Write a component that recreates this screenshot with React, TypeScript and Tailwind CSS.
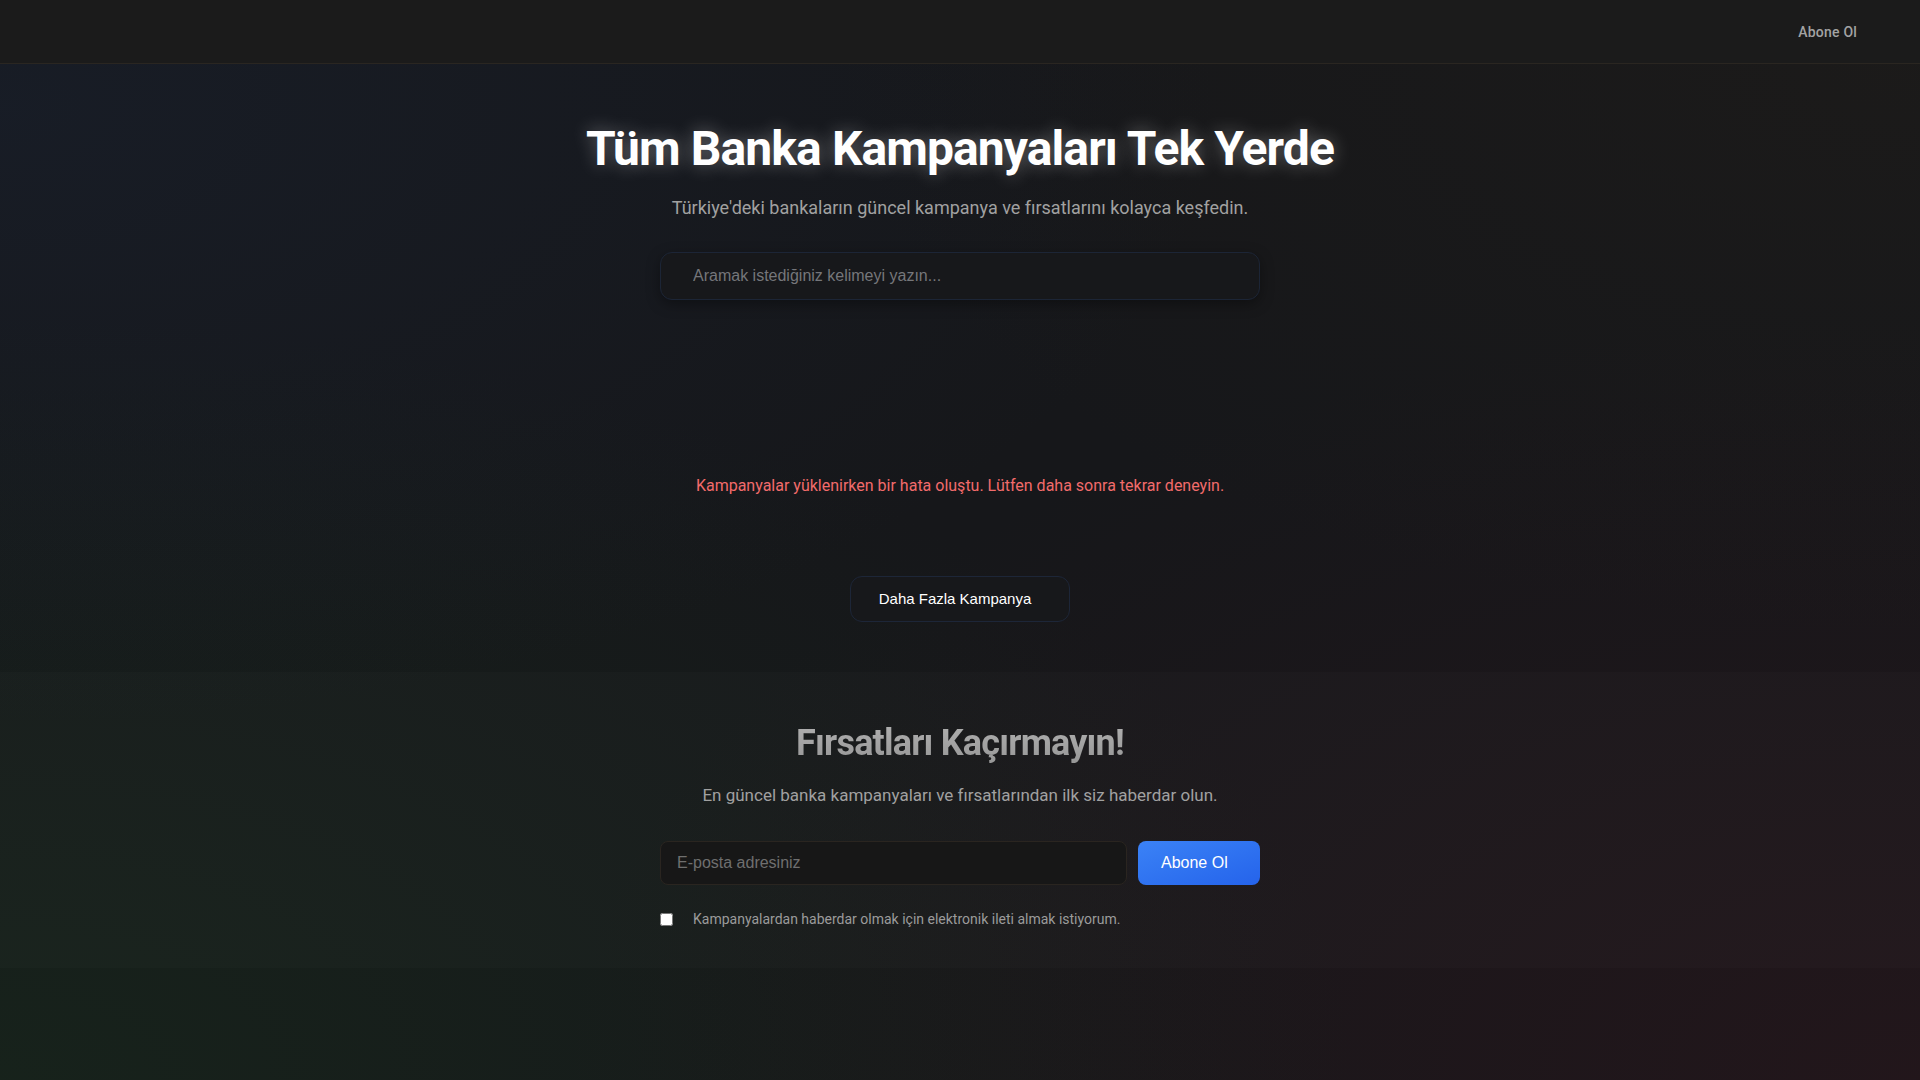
import { useState } from "react";

const roboto = "font-['Roboto',_'Liberation_Sans',_sans-serif]";
const arial = "font-['Liberation_Sans',_Arial,_sans-serif]";

function Header() {
  return (
    <header className="h-16 flex items-center justify-end px-[63px] bg-[#1b1b1b] border-b border-[#2a2621]">
      <a href="#" className={`${roboto} text-sm font-medium tracking-[0.2px] text-[#a3a3a3] hover:text-white`}>
        Abone Ol
      </a>
    </header>
  );
}

function Hero() {
  const [query, setQuery] = useState("");

  return (
    <section className="flex flex-col items-center pt-[61px]">
      <h1
        className={`${roboto} text-5xl leading-none font-bold text-white tracking-[-0.9px] [text-shadow:0_0_18px_rgba(255,255,255,0.35)]`}
      >
        Tüm Banka Kampanyaları Tek Yerde
      </h1>
      <p className={`${roboto} mt-[21px] text-lg leading-7 text-[#a1a1a1]`}>
        Türkiye'deki bankaların güncel kampanya ve fırsatlarını kolayca keşfedin.
      </p>
      <div className="mt-[30px] w-[600px]">
        <input
          type="text"
          value={query}
          onChange={(e) => setQuery(e.target.value)}
          placeholder="Aramak istediğiniz kelimeyi yazın..."
          className={`${arial} w-full h-12 pl-[32px] pr-4 rounded-xl bg-[#17181b] border border-[#1c2536] text-base text-white placeholder:text-[#75767a] shadow-[0_4px_14px_rgba(0,0,0,0.35)] focus:outline-none`}
        />
      </div>

      {/* campaign grid failed to load */}
      <p className={`${roboto} mt-[174px] text-base leading-6 text-[#f26b6b]`}>
        Kampanyalar yüklenirken bir hata oluştu. Lütfen daha sonra tekrar deneyin.
      </p>

      <button
        className={`${arial} mt-[78px] h-[46px] pl-[28px] pr-[38px] rounded-xl bg-[#17181b] border border-[#1d2638] text-[15px] text-white hover:bg-[#1d1e22]`}
      >
        Daha Fazla Kampanya
      </button>
    </section>
  );
}

function Newsletter() {
  const [email, setEmail] = useState("");
  const [consent, setConsent] = useState(false);

  return (
    <section className="mt-[50px] pt-[51px] pb-[39px] bg-white/[0.015] flex flex-col items-center">
      <h2
        className={`${roboto} text-4xl leading-10 font-bold tracking-[-0.8px] bg-gradient-to-b from-[#b0b0b0] to-[#979797] bg-clip-text text-transparent`}
      >
        Fırsatları Kaçırmayın!
      </h2>
      <p className={`${roboto} mt-[18px] text-[17px] leading-7 text-[#a1a1a1]`}>
        En güncel banka kampanyaları ve fırsatlarından ilk siz haberdar olun.
      </p>
      <form
        onSubmit={(e) => e.preventDefault()}
        className="mt-8 w-[600px] flex flex-col"
      >
        <div className="flex gap-[11px]">
          <input
            type="email"
            value={email}
            onChange={(e) => setEmail(e.target.value)}
            placeholder="E-posta adresiniz"
            className={`${arial} flex-1 h-[44px] px-4 rounded-lg bg-[#171717] border border-[#2a2520] text-base text-white placeholder:text-[#6f6f6f] focus:outline-none`}
          />
          <button
            type="submit"
            className={`${arial} w-[122px] h-[44px] pl-[23px] pr-[32px] rounded-lg bg-gradient-to-br from-[#3b82f6] to-[#2563eb] text-base text-white text-left whitespace-nowrap`}
          >
            Abone Ol
          </button>
        </div>
        <label className="mt-[24px] flex items-center gap-[20px] cursor-pointer">
          <input
            type="checkbox"
            checked={consent}
            onChange={(e) => setConsent(e.target.checked)}
            className="w-[13px] h-[13px] m-0 accent-white"
          />
          <span className={`${roboto} text-sm leading-5 text-[#9b9b9b]`}>
            Kampanyalardan haberdar olmak için elektronik ileti almak istiyorum.
          </span>
        </label>
      </form>
    </section>
  );
}

export default function App() {
  return (
    <div className="min-h-screen w-full bg-[#16171a] bg-[radial-gradient(ellipse_at_0%_10%,rgba(30,48,80,0.22),transparent_45%),radial-gradient(ellipse_at_0%_100%,rgba(25,60,30,0.3),transparent_50%),radial-gradient(ellipse_at_100%_100%,rgba(70,20,30,0.25),transparent_50%),radial-gradient(ellipse_at_100%_5%,rgba(50,40,25,0.2),transparent_40%)]">
      <Header />
      <main>
        <Hero />
        <Newsletter />
      </main>
    </div>
  );
}
